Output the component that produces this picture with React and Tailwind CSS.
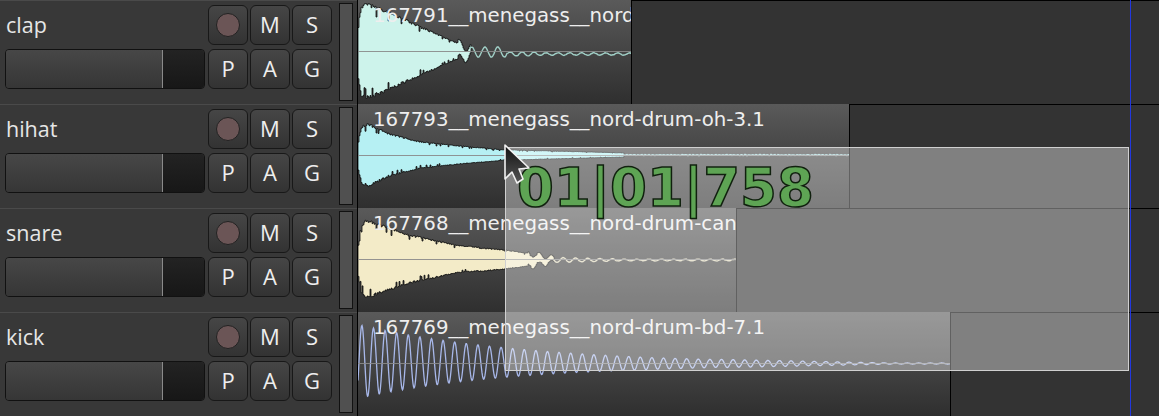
import React from "react";

function rng(seed) {
  let s = seed;
  return () => {
    s = (s * 16807) % 2147483647;
    return (s - 1) / 2147483646;
  };
}

function table(points, x) {
  for (let i = 1; i < points.length; i++) {
    if (x <= points[i][0]) {
      const [a, b] = points[i - 1];
      const [c, d] = points[i];
      return b + ((d - b) * (x - a)) / (c - a);
    }
  }
  return points[points.length - 1][1];
}

function Drum({ width, seed, env, solid, tail, fill, tailColor }) {
  const r = rng(seed);
  const top = [];
  const bot = [];
  const jag = (e) => {
    const notch = r() < 0.08 ? 0.82 : 1;
    return e * (0.92 + 0.08 * r()) * notch;
  };
  for (let x = 0; x <= solid; x += 1) {
    const e = table(env, x);
    const t = tail(x);
    const a = (51 - jag(e) + t).toFixed(1);
    const b = (51 + jag(e) + t).toFixed(1);
    top.push(`${x},${a}`, `${x + 1},${a}`);
    bot.push(`${x},${b}`, `${x + 1},${b}`);
  }
  const line = [];
  for (let x = solid; x <= width; x += 1) {
    line.push(`${x},${(51 + tail(x) + (r() - 0.5) * 0.5).toFixed(1)}`);
  }
  return (
    <svg width={width} height="103" className="absolute left-0 top-0">
      <polygon points={[...top, ...bot.reverse()].join(" ")} fill={fill} stroke="#111111" strokeWidth="0.8" />
      <polyline points={line.join(" ")} fill="none" stroke={tailColor} strokeWidth="1.4" />
      <line x1="0" x2={width} y1="51.5" y2="51.5" stroke="#8a8a8a" strokeWidth="1" opacity="0.9" />
    </svg>
  );
}

function Kick({ width }) {
  const pts = [];
  for (let x = 0; x <= width - 1; x += 0.5) {
    let amp = 37 * Math.exp(-x / 160);
    if (x > 360) amp = Math.max(0.5, 4.2 * (1 - (x - 360) / 200));
    if (x > 560) amp = 0.5;
    const off = -2 * Math.max(0, 1 - x / 287);
    pts.push(`${x},${(51.5 + off - amp * Math.sin(((x - 1) / 11.6) * 2 * Math.PI)).toFixed(2)}`);
  }
  return (
    <svg width={width} height="103" className="absolute left-0 top-0">
      <polyline points={pts.join(" ")} fill="none" stroke="#a8b8ea" strokeWidth="1.3" />
      <line x1="0" x2={width} y1="51.5" y2="51.5" stroke="#8a8a8a" strokeWidth="1" opacity="0.9" />
    </svg>
  );
}

const tracks = [
  {
    name: "clap",
    clip: "167791__menegass__nord-drum-cp-1.1",
    w: 274,
    wave: (
      <Drum
        width={274}
        seed={11}
        fill="#cdf3eb"
        tailColor="#a0cfc6"
        solid={112}
        env={[[0, 30], [3, 46], [8, 49], [30, 40], [64, 24], [97, 9], [113, 4]]}
        tail={(x) => {
          if (x < 100) return 0;
          if (x < 150) return 1 + 5 * Math.sin(x / 2.07);
          return 3 + (x < 180 ? 2 : 1.2) * Math.sin(x / 1.9);
        }}
      />
    ),
  },
  {
    name: "hihat",
    clip: "167793__menegass__nord-drum-oh-3.1",
    w: 492,
    wave: (
      <Drum
        width={492}
        seed={29}
        fill="#b6f0f3"
        tailColor="#a9d8dc"
        solid={265}
        env={[[0, 16], [3, 29], [10, 32], [30, 22], [60, 14], [100, 9.5], [145, 5.5], [200, 4], [265, 2.2]]}
        tail={(x) => (x > 265 ? 0.4 * Math.sin(x * 1.7) : 0)}
      />
    ),
  },
  {
    name: "snare",
    clip: "167768__menegass__nord-drum-can-5.1",
    w: 379,
    wave: (
      <Drum
        width={379}
        seed={47}
        fill="#f3ebc8"
        tailColor="#dcd6ba"
        solid={195}
        env={[[0, 18], [3, 34], [8, 40], [50, 25], [100, 14], [145, 10], [175, 6], [195, 2.5]]}
        tail={(x) => {
          if (x < 170) return x > 120 ? 0.6 : 0;
          if (x < 285) return 1 + 3 * (1 - (x - 170) / 140) * Math.sin(x / 1.95);
          return 1 + 0.8 * Math.sin(x / 1.95);
        }}
      />
    ),
  },
  {
    name: "kick",
    clip: "167769__menegass__nord-drum-bd-7.1",
    w: 593,
    wave: <Kick width={593} />,
  },
];

function Btn({ children }) {
  return (
    <div className="w-10 h-10 flex items-center justify-center rounded-md border border-[#181818] bg-gradient-to-b from-[#464646] to-[#333333] text-[22px] leading-none text-[#eeeeee]">
      {children}
    </div>
  );
}

function L({ children }) {
  return <span className="-mt-[3px]">{children}</span>;
}

function Track({ t }) {
  return (
    <div className="flex h-[104px] shrink-0">
      <div className="w-[357px] shrink-0 border-t border-[#4a4a4a] bg-[#383838] pt-1 flex">
        <div className="w-[208px] pl-[5px] shrink-0 flex flex-col">
          <div className="h-10 pl-px pb-px flex items-center text-[21.5px] leading-none text-[#e6e6e6]">{t.name}</div>
          <div className="mt-1 w-[200px] h-10 rounded border border-[#111111] flex overflow-hidden">
            <div className="w-[157px] border-r border-[#8a8a8a] bg-gradient-to-b from-[#474747] to-[#363636]" />
            <div className="flex-1 bg-gradient-to-b from-[#232323] to-[#171717]" />
          </div>
        </div>
        <div className="w-[124px] shrink-0 grid grid-cols-3 gap-x-[2px] gap-y-1 content-start">
          <Btn>
            <div className="w-[24px] h-[24px] rounded-full bg-[#6b5556] border border-[#222222]" />
          </Btn>
          <Btn><L>M</L></Btn>
          <Btn><L>S</L></Btn>
          <Btn><L>P</L></Btn>
          <Btn><L>A</L></Btn>
          <Btn><L>G</L></Btn>
        </div>
        <div className="ml-[7px] -mt-[2px] w-[14px] h-[98px] bg-[#505050] border border-[#111111]" />
      </div>
      <div className="flex-1 flex border-l border-black bg-[#333333]">
        <div
          className="relative h-full shrink-0 overflow-hidden border-r border-black bg-gradient-to-b from-[#5a5a5a] to-[#2f2f2f]"
          style={{ width: t.w }}
        >
          {t.wave}
          <div
            className="absolute left-[15px] top-[5px] whitespace-nowrap text-[19.8px] leading-[22px] text-[#eeeeee]"
            style={{ fontFamily: '"DejaVu Sans", sans-serif' }}
          >
            {t.clip}
          </div>
        </div>
        <div className="flex-1 border-t border-black" />
      </div>
    </div>
  );
}

export default function App() {
  return (
    <div
      className="relative w-[1159px] h-[416px] overflow-hidden bg-[#333333] flex flex-col"
      style={{ fontFamily: '"Open Sans", "Noto Sans", sans-serif' }}
    >
      {tracks.map((t) => (
        <Track key={t.name} t={t} />
      ))}
      <div className="absolute left-[1130px] top-0 bottom-0 w-px bg-[#2238e0]" />
      <div className="absolute left-[505px] top-[147px] w-[624px] h-[224px] border border-[#d0d0d0] bg-white/[0.38]">
        <div
          className="absolute left-[11px] top-[9px] whitespace-nowrap text-[53px] leading-[62px] font-bold text-[#5ea454] [-webkit-text-stroke:1.5px_#10200e]"
          style={{ fontFamily: '"DejaVu Sans", sans-serif' }}
        >
          01|01|758
        </div>
      </div>
      <svg className="absolute left-[503px] top-[143px]" width="30" height="44" viewBox="0 0 30 44">
        <defs>
          <linearGradient id="cur" x1="0" y1="0" x2="0" y2="1">
            <stop offset="0" stopColor="#111111" />
            <stop offset="1" stopColor="#555555" />
          </linearGradient>
        </defs>
        <path d="M2 2 L2 36 L9 29 L14 40 L20 36 L16 26 L26 25 Z" fill="url(#cur)" stroke="#f2f2f2" strokeWidth="1.6" strokeLinejoin="round" />
      </svg>
    </div>
  );
}
